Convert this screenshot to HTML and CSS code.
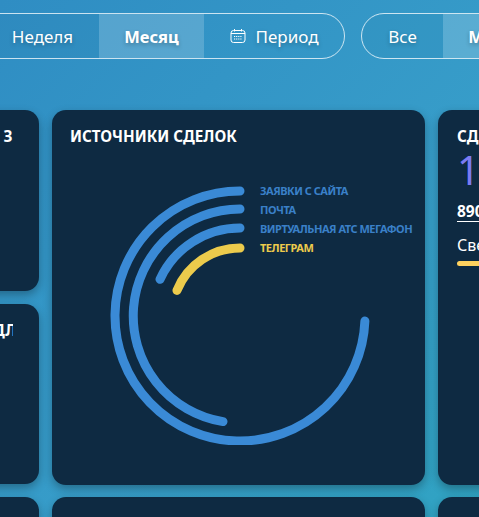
FILE: index.html
```html
<!DOCTYPE html>
<html lang="ru">
<head>
    <meta charset="UTF-8">
    <meta name="viewport" content="width=device-width, initial-scale=1.0">
    <title>Источники сделок</title>
    <link rel="stylesheet" href="styles.css">
</head>
<body>
    <div class="page">
        <div class="toolbar">
            <div class="tabs">
                <div class="tab tab-day">День</div>
                <div class="tab tab-week">Неделя</div>
                <div class="tab tab-month active">Месяц</div>
                <div class="tab tab-period">
                    <svg class="calendar" viewBox="0 0 16 16" width="16" height="16" fill="none" stroke="#fff">
                        <rect x="1" y="2.5" width="14" height="12" rx="2.5"/>
                        <path d="M1 5.5h14M4.5 1v2.5M11.5 1v2.5"/>
                        <path d="M4 8.5h8M4 11h8" stroke-width="1.2" stroke-dasharray="1.2 .9"/>
                    </svg>
                    Период
                </div>
            </div>
            <div class="tabs">
                <div class="tab tab-all">Все</div>
                <div class="tab tab-month active">Месяц</div>
            </div>
        </div>

        <div class="grid">
            <div class="card">
                <h3 class="card-title title-end"><span>ОТВЕТСТВЕННЫЕ З</span></h3>
            </div>

            <div class="card chart-card">
                <h3 class="card-title">ИСТОЧНИКИ СДЕЛОК</h3>
                <svg class="chart" viewBox="0 0 270 270" width="270" height="270" fill="none" stroke-width="9" stroke-linecap="round">
                    <path stroke="#3a8ad6" d="M130 16A125 125 0 1 0 254.9 146"/>
                    <path stroke="#3a8ad6" d="M130 34A107 107 0 0 0 113 246.6"/>
                    <path stroke="#3a8ad6" d="M130 53A88 88 0 0 0 50 104.3"/>
                    <path stroke="#eccb4c" d="M130 73A68 68 0 0 0 67 115.4"/>
                </svg>
                <ul class="legend">
                    <li>ЗАЯВКИ С САЙТА</li>
                    <li>ПОЧТА</li>
                    <li>ВИРТУАЛЬНАЯ АТС МЕГАФОН</li>
                    <li class="legend-yellow">ТЕЛЕГРАМ</li>
                </ul>
            </div>

            <div class="card side-card">
                <h3 class="card-title">СДЕЛКИ</h3>
                <div class="big-number">1</div>
                <div class="phone">89001234567</div>
                <div class="status">Свежие</div>
                <div class="bar"></div>
            </div>

            <div class="card">
                <h3 class="card-title title-end title-cut"><span>ПРОДАЖИ ЗА ПЕРИОД ДЛ</span></h3>
            </div>

            <div class="card"></div>
            <div class="card"></div>
            <div class="card"></div>
        </div>
    </div>
</body>
</html>
```

FILE: styles.css
```css
* {
    margin: 0;
    padding: 0;
    box-sizing: border-box;
}

html, body {
    height: 517px;
    overflow: hidden;
}

body {
    background: linear-gradient(135deg, #2f8dc3 0%, #379dc9 60%, #30a3c2 100%);
    color: #fff;
    font-family: "Noto Sans", sans-serif;
}

.page {
    width: 1000px;
    margin-left: -161.5px;
    padding-top: 13px;
}

.toolbar {
    display: flex;
    gap: 16px;
    margin-left: 46.5px;
    margin-bottom: 51px;
}

.tabs {
    display: flex;
    height: 46px;
    border: 1px solid rgba(255, 255, 255, 0.75);
    border-radius: 23px;
    overflow: hidden;
}

.tab {
    display: flex;
    align-items: center;
    justify-content: center;
    gap: 10px;
    font-size: 17px;
    text-shadow: 0 2px 4px rgba(0, 0, 0, 0.25);
}

.tab.active {
    background: rgba(255, 255, 255, 0.18);
    font-size: 16.5px;
    font-weight: 700;
}

.tab-day { width: 100px; }
.tab-week { width: 113px; background: rgba(0, 0, 0, 0.02); }
.tab-month { width: 105px; }
.tab-period { width: 140px; }
.tab-all { width: 81px; background: rgba(0, 0, 0, 0.02); }

.grid {
    display: grid;
    grid-template-columns: 200px 373.5px 200px;
    grid-template-rows: 181px 180px 100px;
    gap: 13px;
}

.card {
    background: #0e2a42;
    border-radius: 14px;
    box-shadow: 0 4px 10px rgba(0, 0, 0, 0.3);
    padding: 16px 19px;
    overflow: hidden;
}

.card-title {
    font-size: 15.2px;
    font-weight: 700;
    line-height: 20px;
    white-space: nowrap;
}

.title-end {
    display: flex;
    justify-content: flex-end;
    overflow: hidden;
    margin-right: 7px;
}

.title-cut span {
    margin-right: -4px;
}

.chart-card {
    grid-row: span 2;
    margin-bottom: -1px;
    padding-left: 18.5px;
    position: relative;
}

.chart {
    display: block;
    margin: 29px 0 0 39.5px;
}

.legend {
    position: absolute;
    left: 208.5px;
    top: 71px;
    list-style: none;
    font-size: 11px;
    font-weight: 700;
    letter-spacing: -0.48px;
    line-height: 19px;
    color: #3a80c8;
    white-space: nowrap;
}

.legend-yellow {
    color: #eccb4c;
}

.side-card {
    grid-row: span 2;
    margin-bottom: -1px;
}

.big-number {
    margin-top: 2px;
    font-size: 40px;
    line-height: 44px;
    color: #7c7cf2;
}

.phone {
    display: inline-block;
    margin-top: 9px;
    font-size: 15.5px;
    font-weight: 700;
    line-height: 20px;
    border-bottom: 1px solid #fff;
}

.status {
    margin-top: 12px;
    font-size: 16px;
    line-height: 22px;
}

.bar {
    height: 5px;
    margin-top: 5px;
    background: #ffd25f;
    border-radius: 3px;
}
```
